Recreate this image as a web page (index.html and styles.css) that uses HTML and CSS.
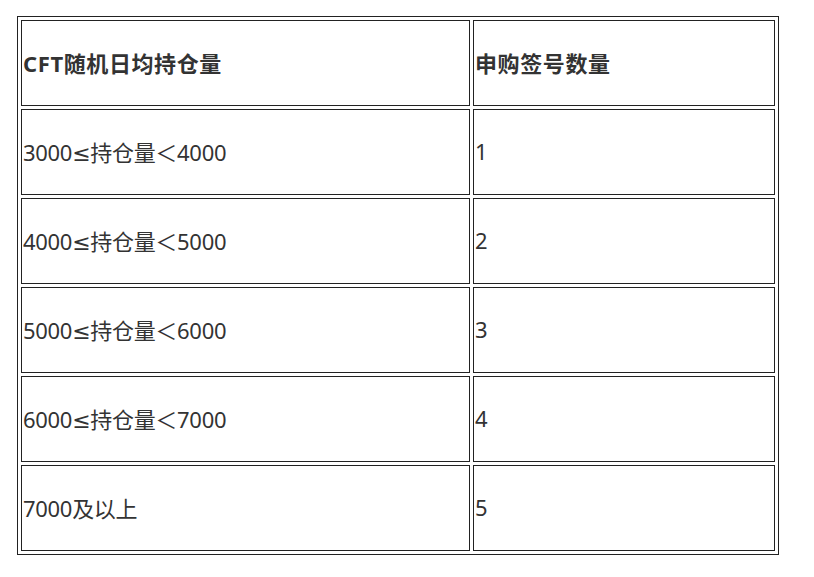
FILE: index.html
```html
<!DOCTYPE html>
<html lang="zh-CN">
<head>
<meta charset="utf-8">
<title>CFT</title>
<link rel="stylesheet" href="styles.css">
</head>
<body>
<table class="tbl">
  <colgroup><col class="c1"><col class="c2"></colgroup>
  <tr><td class="hd">CFT随机日均持仓量</td><td class="hd">申购签号数量</td></tr>
  <tr><td>3000≤持仓量＜4000</td><td>1</td></tr>
  <tr><td>4000≤持仓量＜5000</td><td>2</td></tr>
  <tr><td>5000≤持仓量＜6000</td><td>3</td></tr>
  <tr><td>6000≤持仓量＜7000</td><td>4</td></tr>
  <tr><td>7000及以上</td><td>5</td></tr>
</table>
</body>
</html>
```
FILE: styles.css
```css
html, body { margin: 0; padding: 0; background: #fff; }
body { padding: 16px 0 0 17px; font-family: "Noto Sans", "DejaVu Sans", "Noto Sans CJK SC", sans-serif; color: #333; }
.tbl {
  border-collapse: separate;
  border-spacing: 3px;
  border: 1px solid #222;
  table-layout: fixed;
  width: 761px;
}
.c1 { width: 449px; }
.c2 { width: 302px; }
.tbl td {
  border: 1px solid #222;
  height: 86px;
  padding: 0 1px 3px;
  box-sizing: border-box;
  font-size: 22px;
  letter-spacing: -0.3px;
  vertical-align: middle;
  white-space: nowrap;
}
.tbl td.hd { font-weight: bold; letter-spacing: 0.6px; }
```
